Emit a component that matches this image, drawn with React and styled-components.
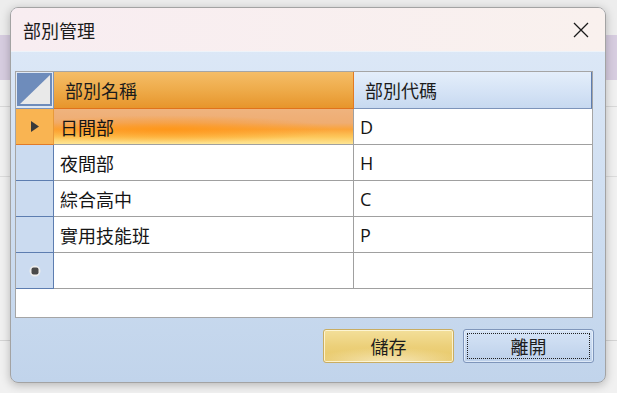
import styled, { createGlobalStyle } from 'styled-components';

const GlobalStyle = createGlobalStyle`
  html, body {
    margin: 0;
    padding: 0;
  }
  * {
    box-sizing: border-box;
  }
`;

const cjk = `"Noto Sans CJK TC", "Noto Sans", sans-serif`;

const Page = styled.div`
  width: 617px;
  height: 393px;
  overflow: hidden;
  padding: 7px 0 0 10px;
  font-family: ${cjk};
  background:
    linear-gradient(to bottom, transparent 106px, #d9d9d9 106px, #d9d9d9 107px, transparent 107px),
    linear-gradient(to bottom, transparent 176px, #dcdcdc 176px, #dcdcdc 177px, transparent 177px),
    linear-gradient(to bottom, transparent 340px, #d4d4d4 340px, #d4d4d4 341px, transparent 341px),
    linear-gradient(to bottom, #ededed 0, #ededed 35px, #d7cde0 35px, #d7cde0 80px, #f1f1f1 80px);
`;

const Dialog = styled.div`
  width: 596px;
  height: 376px;
  border: 1px solid #a3a3a3;
  border-radius: 8px;
  overflow: hidden;
  display: flex;
  flex-direction: column;
  box-shadow: 0 2px 10px rgba(0, 0, 0, 0.25);
  background: linear-gradient(to bottom, #dfeaf8 0%, #c1d4eb 100%);
`;

const TitleBar = styled.div`
  height: 44px;
  flex: none;
  display: flex;
  align-items: center;
  justify-content: space-between;
  padding: 0 16px 0 12px;
  background: linear-gradient(to right, #f8edf1, #f9f1ee);
  border-bottom: 1px solid #eef3f9;
`;

const Title = styled.span`
  font-size: 18px;
  color: #1b1b1b;
`;

const Body = styled.div`
  flex: 1;
  display: flex;
  flex-direction: column;
  padding: 19px 12px 0 4px;
`;

const Grid = styled.div`
  height: 247px;
  border: 1px solid #a5a5a5;
  background: #ffffff;
  display: flex;
  flex-direction: column;
`;

const Row = styled.div`
  display: grid;
  grid-template-columns: 38px 300px 1fr;
  height: ${(p) => (p.$header ? 37 : 36)}px;
  flex: none;
`;

const Corner = styled.div`
  background: #dfe8f4;
  border-right: 1px solid #7f97bd;
  border-bottom: 1px solid #7d94ba;
  padding: 1px;
  display: flex;
`;

const HeadCell = styled.div`
  display: flex;
  align-items: center;
  padding-left: 11px;
  font-size: 18px;
  color: #1c1c1c;
  background: ${(p) =>
    p.$active
      ? 'linear-gradient(to bottom, #f5bd67 0%, #eeab4a 50%, #e7952c 100%)'
      : 'linear-gradient(to bottom, #e4eefa 0%, #d6e4f6 50%, #c7d9f0 100%)'};
  border-bottom: 1px solid ${(p) => (p.$active ? '#e0721c' : '#7d94ba')};
  border-right: 1px solid ${(p) => (p.$active ? '#e27a22' : '#5f7eb0')};
`;

const RowHead = styled.div`
  display: flex;
  align-items: center;
  justify-content: center;
  background: ${(p) => (p.$current ? '#f9b452' : '#cbdbf0')};
  border-right: 1px solid ${(p) => (p.$current ? '#e89a3a' : '#5d7db0')};
  border-bottom: 1px solid ${(p) => (p.$current ? '#e07a2a' : '#5d7db0')};
`;

const Cell = styled.div`
  display: flex;
  align-items: center;
  padding-left: 6px;
  font-size: 18px;
  color: #151515;
  font-family: ${(p) => (p.$code ? `"Open Sans", ${cjk}` : cjk)};
  border-bottom: 1px solid #a0a0a0;
  border-right: ${(p) => (p.$last ? 'none' : '1px solid #a0a0a0')};
  background: ${(p) =>
    p.$selected
      ? 'radial-gradient(ellipse 55% 40% at 38% 58%, rgba(255,148,20,0.8), rgba(255,148,20,0) 100%), linear-gradient(to bottom, #efb37e 0%, #efad72 40%, #fba43a 58%, #fdc85c 80%, #fee594 100%)'
      : '#ffffff'};
`;

const Buttons = styled.div`
  display: flex;
  justify-content: flex-end;
  gap: 9px;
  margin-top: 11px;
  margin-right: -1px;
`;

const Button = styled.button`
  position: relative;
  width: 131px;
  height: 34px;
  border-radius: 3px;
  font-family: ${cjk};
  font-size: 18px;
  color: #1d1d1d;
  padding: 0;
  cursor: pointer;
  border: 1px solid ${(p) => (p.$primary ? '#c9ad62' : '#7f96bb')};
  box-shadow: inset 0 0 0 1px ${(p) => (p.$primary ? 'rgba(255,250,225,0.8)' : 'rgba(235,243,252,0.7)')};
  background: ${(p) =>
    p.$primary
      ? 'radial-gradient(ellipse 60% 45% at 50% 100%, #f6e7b8, rgba(246,231,184,0) 100%), linear-gradient(to bottom, #f3df9a 0%, #ecd07a 50%, #e7c766 100%)'
      : 'linear-gradient(to bottom, #d6e4f6 0%, #c9daf0 50%, #bcd0ea 100%)'};
`;

const FocusRing = styled.span`
  position: absolute;
  inset: 3px;
  border: 1px dotted #202020;
  pointer-events: none;
`;

const CloseIcon = () => (
  <svg width="16" height="16" viewBox="0 0 16 16">
    <path d="M1 1 L15 15 M15 1 L1 15" stroke="#1a1a1a" strokeWidth="1.3" fill="none" />
  </svg>
);

const CornerGlyph = () => (
  <svg width="35" height="33" viewBox="0 0 35 33" preserveAspectRatio="none">
    <rect x="0" y="0" width="35" height="33" fill="#6e8cbb" />
    <polygon points="3,31 33,2 33,31" fill="#e9e9e9" />
  </svg>
);

const Arrow = () => (
  <svg width="8" height="11" viewBox="0 0 8 11">
    <polygon points="0,0 8,5.5 0,11" fill="#3a3a3a" />
  </svg>
);

const NewMark = () => (
  <svg width="12" height="12" viewBox="0 0 12 12">
    <circle cx="6" cy="6" r="5.5" fill="#eeeeee" />
    <rect x="2.5" y="2.5" width="7" height="7" rx="2" fill="#4a4a4a" />
  </svg>
);

const rows = [
  { name: '日間部', code: 'D' },
  { name: '夜間部', code: 'H' },
  { name: '綜合高中', code: 'C' },
  { name: '實用技能班', code: 'P' },
];

export default function App() {
  return (
    <>
      <GlobalStyle />
      <Page>
        <Dialog>
          <TitleBar>
            <Title>部別管理</Title>
            <CloseIcon />
          </TitleBar>
          <Body>
            <Grid>
              <Row $header>
                <Corner>
                  <CornerGlyph />
                </Corner>
                <HeadCell $active>部別名稱</HeadCell>
                <HeadCell>部別代碼</HeadCell>
              </Row>
              {rows.map((r, i) => (
                <Row key={r.code}>
                  <RowHead $current={i === 0}>{i === 0 && <Arrow />}</RowHead>
                  <Cell $selected={i === 0}>{r.name}</Cell>
                  <Cell $code $last>
                    {r.code}
                  </Cell>
                </Row>
              ))}
              <Row>
                <RowHead>
                  <NewMark />
                </RowHead>
                <Cell />
                <Cell $last />
              </Row>
            </Grid>
            <Buttons>
              <Button $primary>儲存</Button>
              <Button>
                <FocusRing />
                離開
              </Button>
            </Buttons>
          </Body>
        </Dialog>
      </Page>
    </>
  );
}
